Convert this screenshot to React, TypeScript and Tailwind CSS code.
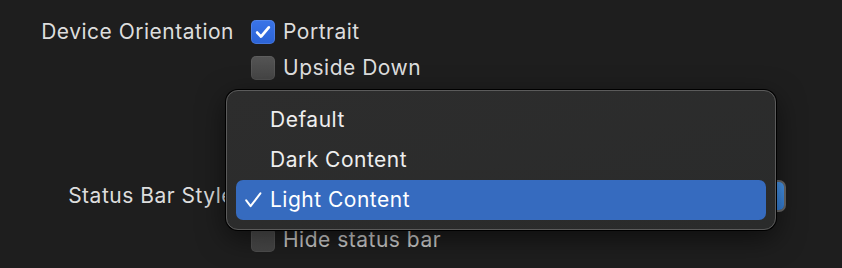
import React from "react";

const font = { fontFamily: "Inter, 'Noto Sans', 'Liberation Sans', sans-serif" };

function Checkbox({ checked }: { checked?: boolean }) {
  if (checked) {
    return (
      <div className="flex h-[24px] w-[24px] shrink-0 items-center justify-center rounded-[5px] bg-gradient-to-b from-[#3a74e8] to-[#2b63d6] shadow-[inset_0_0_0_1px_rgba(255,255,255,0.12)]">
        <svg width="16" height="14" viewBox="0 0 16 14" fill="none">
          <path d="M2.2 7.6 L6 11.6 L13.8 2.4" stroke="white" strokeWidth="2.8" strokeLinecap="round" strokeLinejoin="round" />
        </svg>
      </div>
    );
  }
  return (
    <div className="h-[24px] w-[24px] shrink-0 rounded-[5px] bg-gradient-to-b from-[#545454] to-[#454545] shadow-[inset_0_0_0_1px_rgba(255,255,255,0.06)]" />
  );
}

function CheckRow({ checked, label, dim }: { checked?: boolean; label: string; dim?: boolean }) {
  return (
    <div className="flex h-[24px] items-center gap-[8px]">
      <Checkbox checked={checked} />
      <span className={`text-[21px] leading-[24px] tracking-[0.5px] ${dim ? "text-[#cfcfcf]" : "text-[#dddddd]"}`}>{label}</span>
    </div>
  );
}

export default function App() {
  return (
    <div className="relative h-[268px] w-[842px] overflow-hidden bg-[#1e1e1e]" style={font}>
      <div className="flex flex-col pt-[20px]">
        <div className="flex">
          <div className="w-[234px] text-right text-[21px] leading-[24px] tracking-[0.5px] text-[#dddddd]">Device Orientation</div>
          <div className="ml-[17px] flex flex-col gap-[12px]">
            <CheckRow checked label="Portrait" />
            <CheckRow label="Upside Down" />
            <div className="h-[24px]" />
            <div className="h-[24px]" />
          </div>
        </div>
        <div className="mt-[28px] flex items-center">
          <div className="w-[234px] text-right text-[21px] leading-[24px] tracking-[0.5px] text-[#dddddd]">Status Bar Style</div>
          <div className="ml-[9px] flex h-[32px] w-[543px] items-center justify-end rounded-[7px] border-[2px] border-[#6a6a6a] bg-[#4a4a4a]">
            <div className="h-full w-[22px] rounded-[5px] bg-gradient-to-b from-[#4a9af0] to-[#3580da]" />
          </div>
        </div>
        <div className="mt-[16px] flex">
          <div className="w-[234px]" />
          <div className="ml-[17px]">
            <CheckRow label="Hide status bar" dim />
          </div>
        </div>
      </div>

      <div className="absolute left-[226px] top-[90px] w-[550px] rounded-[12px] border border-[#5b5b5b] bg-gradient-to-br from-[#2d2d2d] to-[#2a2b2b] p-[9px] shadow-[0_0_0_1px_#000,0_8px_28px_rgba(0,0,0,0.55)]">
        <div className="flex h-[40px] items-center pl-[34px] text-[21px] tracking-[0.5px] text-[#eeeeee]">Default</div>
        <div className="flex h-[40px] items-center pl-[34px] text-[21px] tracking-[0.5px] text-[#eeeeee]">Dark Content</div>
        <div className="flex h-[40px] items-center rounded-[7px] bg-[#366bbf] pl-[9px] text-[21px] tracking-[0.5px] text-white">
          <svg width="17" height="16" viewBox="0 0 17 16" fill="none" className="mr-[8px]">
            <path d="M1.2 8.4 L5.6 14.2 L15.4 1.4" stroke="white" strokeWidth="2" strokeLinecap="round" strokeLinejoin="round" />
          </svg>
          Light Content
        </div>
      </div>
    </div>
  );
}
